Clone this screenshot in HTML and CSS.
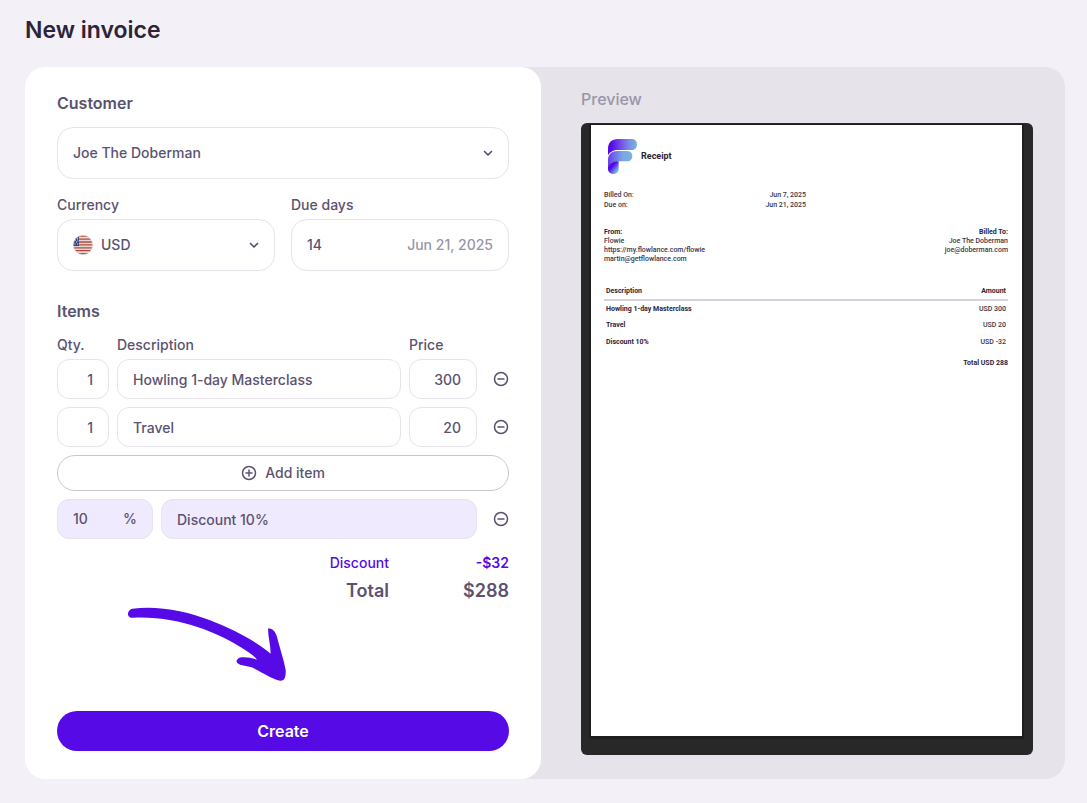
FILE: index.html
```html
<!DOCTYPE html>
<html lang="en">
	<head>
		<title>New invoice</title>
		<meta charset="UTF-8" />
		<meta name="viewport" content="width=device-width, initial-scale=1" />
		<link rel="stylesheet" href="styles.css">
	</head>
	<body>
		<svg class="symbols" aria-hidden="true">
			<symbol id="chevron" viewBox="0 0 10 10">
				<path d="M1.5 3.5 L5 7 L8.5 3.5" fill="none" stroke="currentColor" stroke-width="1.7" stroke-linecap="round" stroke-linejoin="round" />
			</symbol>
			<symbol id="minus" viewBox="0 0 16 16">
				<circle cx="8" cy="8" r="6.5" fill="none" stroke="currentColor" stroke-width="1.5" />
				<path d="M5 8 H11" stroke="currentColor" stroke-width="1.5" stroke-linecap="round" />
			</symbol>
			<symbol id="plus" viewBox="0 0 16 16">
				<circle cx="8" cy="8" r="6.5" fill="none" stroke="currentColor" stroke-width="1.5" />
				<path d="M5 8 H11 M8 5 V11" stroke="currentColor" stroke-width="1.5" stroke-linecap="round" />
			</symbol>
		</svg>
		<main>
			<h1>New invoice</h1>
			<div class="panel">
				<form class="invoice">
					<h2><label for="customer">Customer</label></h2>
					<div class="field">
						<select id="customer">
							<option>Joe The Doberman</option>
						</select>
						<svg class="chevron"><use href="#chevron" /></svg>
					</div>
					<div class="terms">
						<div>
							<label for="currency">Currency</label>
							<div class="field">
								<svg class="flag" viewBox="0 0 20 20">
									<clipPath id="round"><circle cx="10" cy="10" r="9.7" /></clipPath>
									<g clip-path="url(#round)">
										<path d="M0 0 H20 V20 H0 Z" fill="#e3d8d2" />
										<path d="M0 1.2 H20 M0 4.1 H20 M0 7 H20 M0 9.9 H20 M0 12.8 H20 M0 15.7 H20 M0 18.6 H20" stroke="#b5493f" stroke-width="1.3" />
										<path d="M0 0 H6 V11 H0 Z" fill="#343f78" />
										<path d="M1.5 5.5 h1 M4 4 h1 M3 7 h1 M1.5 9 h1 M4.2 9 h1 M4.4 6 h1" stroke="#fff" />
									</g>
									<circle cx="10" cy="10" r="9.5" fill="none" stroke="#d3cdd0" stroke-opacity=".6" />
								</svg>
								<select id="currency">
									<option>USD</option>
								</select>
								<svg class="chevron"><use href="#chevron" /></svg>
							</div>
						</div>
						<div>
							<label for="due">Due days</label>
							<div class="field">
								<input type="text" id="due" value="14" />
								<output for="due">Jun 21, 2025</output>
							</div>
						</div>
					</div>

					<h2 class="items-title">Items</h2>
					<div class="line labels">
						<label for="qty1">Qty.</label>
						<label for="desc1">Description</label>
						<label for="price1">Price</label>
					</div>
					<div class="rows">
						<div class="line">
							<input type="text" class="box number" id="qty1" value="1" />
							<input type="text" class="box" id="desc1" value="Howling 1-day Masterclass" />
							<input type="text" class="box number" id="price1" value="300" />
							<button type="button" class="remove" aria-label="Remove item"><svg><use href="#minus" /></svg></button>
						</div>
						<div class="line">
							<input type="text" class="box number" aria-label="Quantity" value="1" />
							<input type="text" class="box" aria-label="Description" value="Travel" />
							<input type="text" class="box number" aria-label="Price" value="20" />
							<button type="button" class="remove" aria-label="Remove item"><svg><use href="#minus" /></svg></button>
						</div>
						<button type="button" class="add"><svg><use href="#plus" /></svg>Add item</button>
						<div class="line discount">
							<div class="box percent">
								<input type="text" id="percent" aria-label="Discount percentage" value="10" />
								<label for="percent">%</label>
							</div>
							<input type="text" class="box" aria-label="Discount description" value="Discount 10%" />
							<button type="button" class="remove" aria-label="Remove discount"><svg><use href="#minus" /></svg></button>
						</div>
					</div>

					<dl class="sums">
						<dt class="off">Discount</dt>
						<dd class="off amount">-$32</dd>
						<dt class="total">Total</dt>
						<dd class="total">$288</dd>
					</dl>

					<svg class="arrow" viewBox="54 51 474 222" aria-hidden="true">
						<path d="M67 56 C140 46 230 62 300 91 C370 118 440 155 482 191 C482 165 474 140 474 116 C486 112 497 126 501 140 C508 170 522 210 527 240 Q529 272 512 272 C500 274 460 250 425 232 L390 224 Q375 217 381 210 Q385 202 394 202 Q418 200 441 209 C430 192 400 177 380 164 C320 130 210 78 72 83 C60 86 52 77 54 69 Q57 58 67 56 Z" />
					</svg>

					<button type="submit" class="create">Create</button>
				</form>

				<section class="preview">
					<h2>Preview</h2>
					<div class="viewer">
						<article class="paper">
							<header>
								<svg class="logo" viewBox="114 177 87 105">
									<defs>
										<linearGradient id="top">
											<stop offset=".1" stop-color="#5408e8" />
											<stop offset=".45" stop-color="#7350ea" />
											<stop offset=".75" stop-color="#7a90e4" />
											<stop offset="1" stop-color="#77b4e2" />
										</linearGradient>
										<linearGradient id="middle">
											<stop offset="0" stop-color="#6a3cea" />
											<stop offset=".6" stop-color="#79a8e4" />
											<stop offset="1" stop-color="#77b4e2" />
										</linearGradient>
										<linearGradient id="leg" x2="1" y2="1">
											<stop offset=".4" stop-color="#5408e8" />
											<stop offset=".8" stop-color="#77b4e2" />
										</linearGradient>
									</defs>
									<path d="M114 226 V207 C114 188 125 177 144 177 H186 C206 177 206 210 186 210 H145 C130 210 119 216 114 226 Z" fill="url(#top)" />
									<path d="M114 262 V240 C114 223 126 213 143 213 H172 C192 213 192 244 172 244 H144 C130 244 120 250 114 262 Z" fill="url(#middle)" />
									<path d="M114 266 V261 C119 250 130 244 146 244 V266 C146 287 114 287 114 266 Z" fill="url(#leg)" />
								</svg>
								<h3>Receipt</h3>
							</header>
							<dl class="dates">
								<dt>Billed On:</dt>
								<dd>Jun 7, 2025</dd>
								<dt>Due on:</dt>
								<dd>Jun 21, 2025</dd>
							</dl>
							<div class="parties">
								<p>
									<b>From:</b><br />
									Flowie<br />
									https://my.flowlance.com/flowie<br />
									martin@getflowlance.com
								</p>
								<p>
									<b>Billed To:</b><br />
									Joe The Doberman<br />
									joe@doberman.com
								</p>
							</div>
							<table>
								<thead>
									<tr><th>Description</th><th>Amount</th></tr>
								</thead>
								<tbody>
									<tr><th>Howling 1-day Masterclass</th><td>USD 300</td></tr>
									<tr><th>Travel</th><td>USD 20</td></tr>
									<tr><th>Discount 10%</th><td>USD -32</td></tr>
								</tbody>
							</table>
							<p class="due-total">Total USD 288</p>
						</article>
					</div>
				</section>
			</div>
		</main>
	</body>
</html>
```

FILE: styles.css
```css
* {
	box-sizing: border-box;
}

body {
	margin: 0;
	background: #f3f1f7;
	color: #5b5270;
	font: 500 14px/20px Inter, "Liberation Sans", sans-serif;
}

h1, h2, h3, p, dl, dd {
	margin: 0;
}

input, select, button {
	margin: 0;
	padding: 0;
	border: 0;
	background: transparent;
	color: inherit;
	font: inherit;
}

input, select {
	min-width: 0;
	width: 100%;
}

select {
	flex: 1;
	appearance: none;
}

button {
	cursor: pointer;
}

svg {
	display: block;
	flex: none;
	width: 16px;
	height: 16px;
}

.symbols {
	display: none;
}

main {
	padding: 14px 22px 24px 25px;
}

h1 {
	margin-bottom: 21px;
	color: #2c2438;
	font-size: 23px;
	font-weight: 600;
	line-height: 32px;
}

h2 {
	margin-bottom: 12px;
	font-size: 16px;
	font-weight: 600;
	line-height: 24px;
}

.panel {
	display: flex;
	border-radius: 20px;
	background: #e6e4ea;
}

.invoice {
	display: flex;
	flex: 1 1 0;
	flex-direction: column;
	min-width: 0;
	padding: 24px 32px 28px;
	border-radius: 20px;
	background: #fff;
}

.field {
	display: flex;
	align-items: center;
	gap: 8px;
	height: 52px;
	padding: 0 15px;
	border: 1px solid #e6e4ea;
	border-radius: 16px;
}

.field output {
	flex: none;
	color: #9a95a8;
}

.field .chevron {
	width: 10px;
	height: 10px;
	pointer-events: none;
}

.field .flag {
	width: 20px;
	height: 20px;
}

.terms {
	display: grid;
	grid-template-columns: 1fr 1fr;
	gap: 16px;
	margin-top: 16px;
}

.terms label {
	display: block;
	margin-bottom: 4px;
}

.items-title {
	margin-top: 28px;
}

.line {
	display: grid;
	grid-template-columns: 52px 1fr 68px 24px;
	align-items: center;
	gap: 8px;
}

.labels {
	margin-bottom: 4px;
}

.rows {
	display: flex;
	flex-direction: column;
	gap: 8px;
}

.box {
	height: 40px;
	padding: 0 15px;
	border: 1px solid #e6e4ea;
	border-radius: 12px;
}

.number {
	text-align: right;
}

.remove {
	display: flex;
	align-items: center;
	justify-content: flex-end;
	height: 24px;
}

.add {
	display: flex;
	align-items: center;
	justify-content: center;
	gap: 8px;
	height: 36px;
	border: 1px solid #c9c6d1;
	border-radius: 18px;
}

.discount {
	grid-template-columns: 96px 1fr 24px;
}

.discount .box {
	background: #efeafe;
}

.percent {
	display: flex;
	align-items: center;
}

.sums {
	display: grid;
	grid-template-columns: 1fr 120px;
	gap: 4px 0;
	margin-top: 12px;
	line-height: 24px;
	text-align: right;
}

.off {
	color: #560be6;
}

.amount {
	font-weight: 600;
}

.total {
	font-size: 18px;
	font-weight: 600;
}

.arrow {
	width: 158px;
	height: 74px;
	margin: 4px 0 0 71px;
	fill: #560be6;
}

.create {
	height: 40px;
	margin-top: auto;
	border-radius: 20px;
	background: #560be6;
	color: #fff;
	font-size: 16px;
	font-weight: 600;
}

.preview {
	flex: 1 1 0;
	min-width: 0;
	padding: 20px 32px 24px 40px;
}

.preview h2 {
	color: #9a95a8;
	font-weight: 500;
}

.viewer {
	padding: 2px 11px 19px 10px;
	border-radius: 6px;
	background: #282828;
}

.paper {
	aspect-ratio: 431 / 611;
	padding: 14px 14px 14px 13px;
	background: #fff;
	box-shadow: 0 1px 0 2px #1e1e1e;
	color: #3b3547;
	font: 500 7px/9px Roboto, sans-serif;
}

.paper header {
	display: flex;
	align-items: center;
	gap: 4px;
	padding-left: 4px;
}

.paper .logo {
	width: 29px;
	height: 35px;
}

.paper h3 {
	color: #2c2438;
	font-size: 9px;
	font-weight: 700;
}

.dates {
	display: grid;
	grid-template-columns: 1fr auto;
	width: 50%;
	margin-top: 16px;
	line-height: 10px;
	text-align: right;
}

.dates dt {
	text-align: left;
}

.parties {
	display: flex;
	justify-content: space-between;
	margin-top: 18px;
}

.parties p + p {
	text-align: right;
}

.paper table {
	width: 100%;
	margin-top: 19px;
	border-collapse: collapse;
}

.paper th, .paper td {
	height: 17px;
	padding: 0 2px;
	text-align: left;
}

.paper th:last-child, .paper td:last-child {
	text-align: right;
}

.paper thead th {
	border-bottom: 2px solid #d3d1da;
}

.paper th, .paper b, .due-total {
	color: #2c2438;
	font-weight: 700;
}

.due-total {
	margin-top: 8px;
	text-align: right;
}
```
